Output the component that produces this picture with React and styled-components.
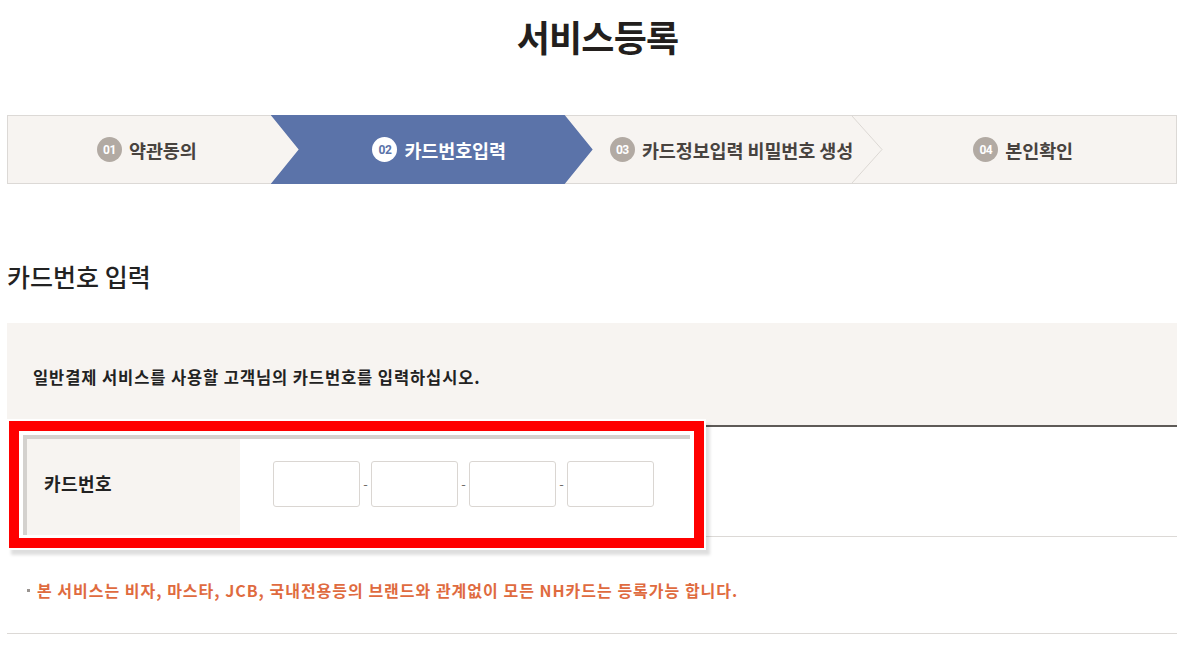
import styled, { createGlobalStyle } from "styled-components";

const steps = [
  { no: "01", label: "약관동의" },
  { no: "02", label: "카드번호입력", active: true },
  { no: "03", label: "카드정보입력 비밀번호 생성", chevron: true },
  { no: "04", label: "본인확인" },
];

export default function App() {
  return (
    <>
      <GlobalStyle />
      <Page>
        <Title>서비스등록</Title>

        <StepBar>
          {steps.map((s) => (
            <Step key={s.no} $active={s.active}>
              <StepNo $active={s.active}>{s.no}</StepNo>
              <StepLabel>{s.label}</StepLabel>
              {s.chevron && (
                <Chevron viewBox="0 0 31 68" preserveAspectRatio="none">
                  <polyline
                    points="0,0 30,34 0,68"
                    fill="none"
                    stroke="#dcd8d4"
                    strokeWidth="1"
                  />
                </Chevron>
              )}
            </Step>
          ))}
        </StepBar>

        <SectionTitle>카드번호 입력</SectionTitle>

        <InfoPanel>
          일반결제 서비스를 사용할 고객님의 카드번호를 입력하십시오.
        </InfoPanel>

        <FormRow>
          <LabelCell>카드번호</LabelCell>
          <FieldCell>
            {[0, 1, 2, 3].map((i) => (
              <FieldGroup key={i}>
                {i > 0 && <Dash>-</Dash>}
                <CardInput maxLength={4} />
              </FieldGroup>
            ))}
          </FieldCell>
          {/* 캡처 강조 박스 */}
          <Highlight>
            <HighlightInner>
              <HighlightEdge />
            </HighlightInner>
          </Highlight>
        </FormRow>

        <Note>
          본 서비스는 비자, 마스타, JCB, 국내전용등의 브랜드와 관계없이 모든
          NH카드는 등록가능 합니다.
        </Note>
      </Page>
    </>
  );
}

// STYLED COMPONENTS
const GlobalStyle = createGlobalStyle`
  body {
    margin: 0;
    background: #fff;
    font-family: "Noto Sans CJK KR", "Noto Sans", sans-serif;
    color: #222;
  }
  * {
    box-sizing: border-box;
  }
`;

const Page = styled.div`
  width: 1184px;
  padding: 0 7px;
`;

const Title = styled.h1`
  margin: 0 0 59px;
  padding: 16px 0 0 11px;
  text-align: center;
  font-size: 36px;
  line-height: 40px;
  font-weight: 700;
  letter-spacing: -0.8px;
  color: #231f1d;
`;

const StepBar = styled.div`
  display: flex;
  height: 69px;
  background: #f7f4f1;
  border: 1px solid #dcd9d6;
`;

const Step = styled.div`
  position: relative;
  flex: 1;
  display: flex;
  align-items: center;
  justify-content: center;
  gap: 7px;
  padding-right: 14px;
  color: #48433f;

  ${({ $active }) =>
    $active &&
    `
    z-index: 1;
    margin: -1px 0 -1px -29px;
    padding-left: 29px;
    flex: 0 0 322px;
    background: #5b73a9;
    color: #fff;
    clip-path: polygon(0 0, calc(100% - 28px) 0, 100% 50%, calc(100% - 28px) 100%, 0 100%, 28px 50%);
  `}
`;

const StepNo = styled.span`
  display: flex;
  align-items: center;
  justify-content: center;
  width: 25px;
  height: 25px;
  border-radius: 50%;
  background: ${({ $active }) => ($active ? "#fff" : "#b2aaa3")};
  color: ${({ $active }) => ($active ? "#5b73a9" : "#fff")};
  font-family: Roboto, sans-serif;
  font-size: 12px;
  font-weight: 700;
  letter-spacing: -0.5px;
`;

const StepLabel = styled.span`
  font-size: 18.5px;
  font-weight: 700;
  letter-spacing: -0.1px;
`;

const Chevron = styled.svg`
  position: absolute;
  right: 1px;
  top: 0;
  width: 31px;
  height: 100%;
`;

const SectionTitle = styled.h2`
  margin: 77px 0 32px;
  font-size: 25px;
  line-height: 30px;
  font-weight: 500;
  letter-spacing: 0;
  color: #222;
`;

const InfoPanel = styled.div`
  height: 102px;
  padding: 44px 0 0 26px;
  background: #f7f4f1;
  font-size: 16.5px;
  line-height: 20px;
  font-weight: 700;
  letter-spacing: 0.9px;
  color: #222;
`;

const FormRow = styled.div`
  position: relative;
  display: flex;
  height: 112px;
  border-top: 2px solid #5e5a57;
  border-bottom: 1px solid #dcd9d6;
`;

const LabelCell = styled.div`
  display: flex;
  align-items: center;
  width: 233px;
  padding: 2px 0 0 37px;
  background: #f7f4f1;
  font-size: 18px;
  font-weight: 700;
  letter-spacing: 0.4px;
  color: #222;
`;

const FieldCell = styled.div`
  display: flex;
  align-items: center;
  padding: 4px 0 0 33px;
`;

const FieldGroup = styled.div`
  display: flex;
  align-items: center;
`;

const Dash = styled.span`
  width: 11px;
  text-align: center;
  font-size: 13px;
  color: #6f6a66;
`;

const CardInput = styled.input`
  width: 87px;
  height: 46px;
  border: 1px solid #dad6d2;
  border-radius: 3px;
  background: #fff;
  outline: none;
`;

const Highlight = styled.div`
  position: absolute;
  left: 2px;
  top: -6px;
  width: 695px;
  height: 127px;
  border: 10px solid #ff0000;
  box-shadow: 0 0 0 2px #fff, 4px 5px 3px 2px rgba(0, 0, 0, 0.13);
  pointer-events: none;
`;

const HighlightInner = styled.div`
  height: 100%;
  border: 4px solid #fff;
  border-bottom-width: 3px;
`;

const HighlightEdge = styled.div`
  height: 100%;
  border-top: 4px solid #d4d1ce;
  border-left: 4px solid #d4d1ce;
`;

const Note = styled.p`
  position: relative;
  margin: 43px 0 0;
  padding: 0 0 33px 30px;
  border-bottom: 1px solid #dcd9d6;
  font-size: 16px;
  line-height: 20px;
  font-weight: 700;
  letter-spacing: 1px;
  color: #df6b3f;

  &::before {
    content: "";
    position: absolute;
    left: 20px;
    top: 9px;
    width: 3px;
    height: 3px;
    background: #9a9591;
  }
`;
